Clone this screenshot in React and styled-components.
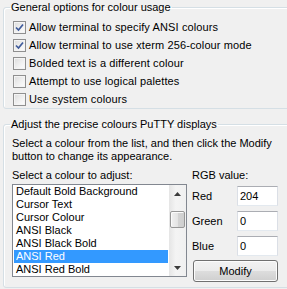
import React from "react";
import styled, { createGlobalStyle } from "styled-components";

const Global = createGlobalStyle`
  html, body { margin: 0; padding: 0; }
  body {
    background: #f0f0f0;
    width: 287px;
    height: 289px;
    overflow: hidden;
    font-family: "Liberation Sans", Arial, sans-serif;
    font-size: 11px;
    color: #000;
  }
`;

const Page = styled.div`
  width: 300px;
  padding: 1px 0 0 3px;
  display: flex;
  flex-direction: column;
  gap: 9px;
`;

const Group = styled.fieldset`
  margin: 0;
  border: 1px solid #d5dfe5;
  border-radius: 3px;
  box-shadow: inset 1px 1px 0 #fff;
  padding: ${(p) => p.$pad};
  min-width: 0;
`;

const Legend = styled.legend`
  padding: 0 1px;
  margin-left: 6px;
  line-height: 13px;
  font-size: 11px;
`;

const CheckList = styled.div`
  display: flex;
  flex-direction: column;
  margin-bottom: -1px;
`;

const CheckRow = styled.label`
  display: flex;
  align-items: flex-start;
  height: 18px;
  gap: 3px;
  padding-left: 9px;
`;

const Box = styled.span`
  margin-top: 2px;
  width: 13px;
  height: 13px;
  box-sizing: border-box;
  border: 1px solid #8f8f8f;
  background: linear-gradient(135deg, #dcdcdc 0%, #f2f2f2 60%, #fdfdfd 100%);
  box-shadow: inset 0 0 0 1px #f4f4f4;
  display: flex;
  align-items: center;
  justify-content: center;
  flex: none;
`;

const CheckText = styled.span`
  line-height: 13px;
  margin-top: 2px;
  letter-spacing: 0.12px;
`;

const Check = ({ checked, children }) => (
  <CheckRow>
    <Box>
      {checked && (
        <svg width="9" height="9" viewBox="0 0 9 9">
          <path d="M1 4.5 L3.5 7 L8 1.5" fill="none" stroke="#3f5b9b" strokeWidth="1.7" />
        </svg>
      )}
    </Box>
    <CheckText>{children}</CheckText>
  </CheckRow>
);

const Para = styled.div`
  line-height: 13px;
  padding-left: 8px;
`;

const Columns = styled.div`
  display: flex;
  gap: 5px;
  padding-left: 8px;
  margin-top: 6px;
`;

const LeftCol = styled.div`
  display: flex;
  flex-direction: column;
  gap: 2px;
`;

const Label = styled.div`
  line-height: 13px;
`;

const ListBox = styled.div`
  width: 175px;
  height: 93px;
  box-sizing: border-box;
  border: 1px solid #828790;
  background: #fff;
  display: flex;
`;

const Items = styled.div`
  flex: 1;
  padding: 0 1px;
  display: flex;
  flex-direction: column;
`;

const Item = styled.div`
  height: 13px;
  line-height: 13px;
  padding-left: 2px;
  background: ${(p) => (p.$sel ? "#3399ff" : "transparent")};
  color: ${(p) => (p.$sel ? "#fff" : "#000")};
  white-space: nowrap;
`;

const Scroll = styled.div`
  width: 17px;
  background: linear-gradient(90deg, #e5e5e5, #f4f4f4 40%, #f0f0f0);
  display: flex;
  flex-direction: column;
  align-items: center;
`;

const Arrow = styled.div`
  width: 17px;
  height: 17px;
  display: flex;
  align-items: center;
  justify-content: center;
`;

const Track = styled.div`
  flex: 1;
  width: 17px;
  display: flex;
  flex-direction: column;
  align-items: center;
  padding-top: 9px;
`;

const Thumb = styled.div`
  width: 15px;
  height: 17px;
  box-sizing: border-box;
  border: 1px solid #979797;
  border-radius: 2px;
  background: linear-gradient(90deg, #f1f1f1, #e4e4e4 50%, #d4d4d4 51%, #cfcfcf);
  box-shadow: inset 1px 1px 0 #fbfbfb;
`;

const RightCol = styled.div`
  display: flex;
  flex-direction: column;
`;

const RgbGrid = styled.div`
  display: grid;
  grid-template-columns: 45px 41px;
  row-gap: 5px;
  margin-top: 4px;
  align-items: center;
`;

const Edit = styled.div`
  height: 20px;
  box-sizing: border-box;
  background: #fff;
  border: 1px solid #dbdfe6;
  border-top-color: #abadb3;
  border-bottom-color: #e3e9ef;
  padding: 2px 0 0 2px;
  line-height: 14px;
`;

const Button = styled.button`
  margin-top: 4px;
  margin-left: 1px;
  width: 85px;
  height: 22px;
  border: 1px solid #707070;
  border-radius: 3px;
  background: linear-gradient(180deg, #f2f2f2 0%, #ebebeb 50%, #dddddd 51%, #cfcfcf 100%);
  box-shadow: inset 0 0 0 1px #fcfcfc;
  font-family: inherit;
  font-size: 11px;
  color: #000;
  padding: 0;
`;

const Tri = ({ up }) => (
  <svg width="7" height="4" viewBox="0 0 7 4">
    <path d={up ? "M0 4 L3.5 0 L7 4 Z" : "M0 0 L7 0 L3.5 4 Z"} fill="#3c3c3c" />
  </svg>
);

const items = [
  "Default Bold Background",
  "Cursor Text",
  "Cursor Colour",
  "ANSI Black",
  "ANSI Black Bold",
  "ANSI Red",
  "ANSI Red Bold",
];

export default function App() {
  return (
    <>
      <Global />
      <Page>
        <Group $pad="5px 0 0 0">
          <Legend>General options for colour usage</Legend>
          <CheckList>
            <Check checked>Allow terminal to specify ANSI colours</Check>
            <Check checked>Allow terminal to use xterm 256-colour mode</Check>
            <Check>Bolded text is a different colour</Check>
            <Check>Attempt to use logical palettes</Check>
            <Check>Use system colours</Check>
          </CheckList>
        </Group>
        <Group $pad="6px 0 5px 0">
          <Legend>Adjust the precise colours PuTTY displays</Legend>
          <Para>
            Select a colour from the list, and then click the Modify
            <br />
            button to change its appearance.
          </Para>
          <Columns>
            <LeftCol>
              <Label>Select a colour to adjust:</Label>
              <ListBox>
                <Items>
                  {items.map((t) => (
                    <Item key={t} $sel={t === "ANSI Red"}>
                      {t}
                    </Item>
                  ))}
                </Items>
                <Scroll>
                  <Arrow>
                    <Tri up />
                  </Arrow>
                  <Track>
                    <Thumb />
                  </Track>
                  <Arrow>
                    <Tri />
                  </Arrow>
                </Scroll>
              </ListBox>
            </LeftCol>
            <RightCol>
              <Label>RGB value:</Label>
              <RgbGrid>
                <Label>Red</Label>
                <Edit>204</Edit>
                <Label>Green</Label>
                <Edit>0</Edit>
                <Label>Blue</Label>
                <Edit>0</Edit>
              </RgbGrid>
              <Button>Modify</Button>
            </RightCol>
          </Columns>
        </Group>
      </Page>
    </>
  );
}
